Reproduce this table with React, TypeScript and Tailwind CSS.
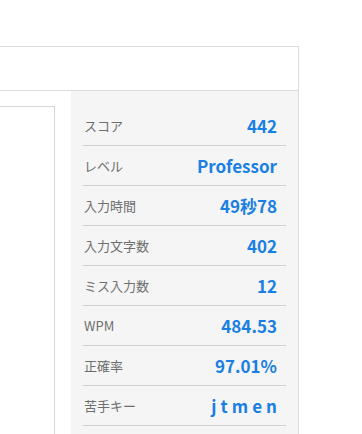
const stats = [
  { label: "スコア", value: "442" },
  { label: "レベル", value: "Professor" },
  { label: "入力時間", value: "49秒78" },
  { label: "入力文字数", value: "402" },
  { label: "ミス入力数", value: "12" },
  { label: "WPM", value: "484.53" },
  { label: "正確率", value: "97.01%" },
  { label: "苦手キー", value: "jtmen", spaced: true },
];

export default function App() {
  return (
    <div className="w-[362px] h-[434px] bg-white overflow-hidden font-['Noto_Sans_CJK_JP','Noto_Sans',sans-serif]">
      <div className="mt-[46px] ml-[-20px] w-[319px] border border-[#dcdcdc] bg-white">
        <div className="h-[44px] border-b border-[#dcdcdc]" />
        <div className="flex">
          <div className="flex-1 pt-[15px] pr-4">
            <div className="h-[340px] border border-[#d6d6d6] bg-white" />
          </div>
          <div className="w-[227px] bg-[#f5f5f5] px-3 pt-[15px] pb-2">
            {stats.map((s) => (
              <div key={s.label} className="h-[40px] flex items-center justify-between border-b border-[#d0d0d0] pl-px pr-[9px]">
                <span className="text-[13px] text-[#6e6e6e]">{s.label}</span>
                <span className={"text-[17px] font-bold text-[#1a7fe3]" + (s.spaced ? " tracking-[0.24em] mr-[-0.24em]" : "")}>
                  {s.value}
                </span>
              </div>
            ))}
          </div>
        </div>
      </div>
    </div>
  );
}
